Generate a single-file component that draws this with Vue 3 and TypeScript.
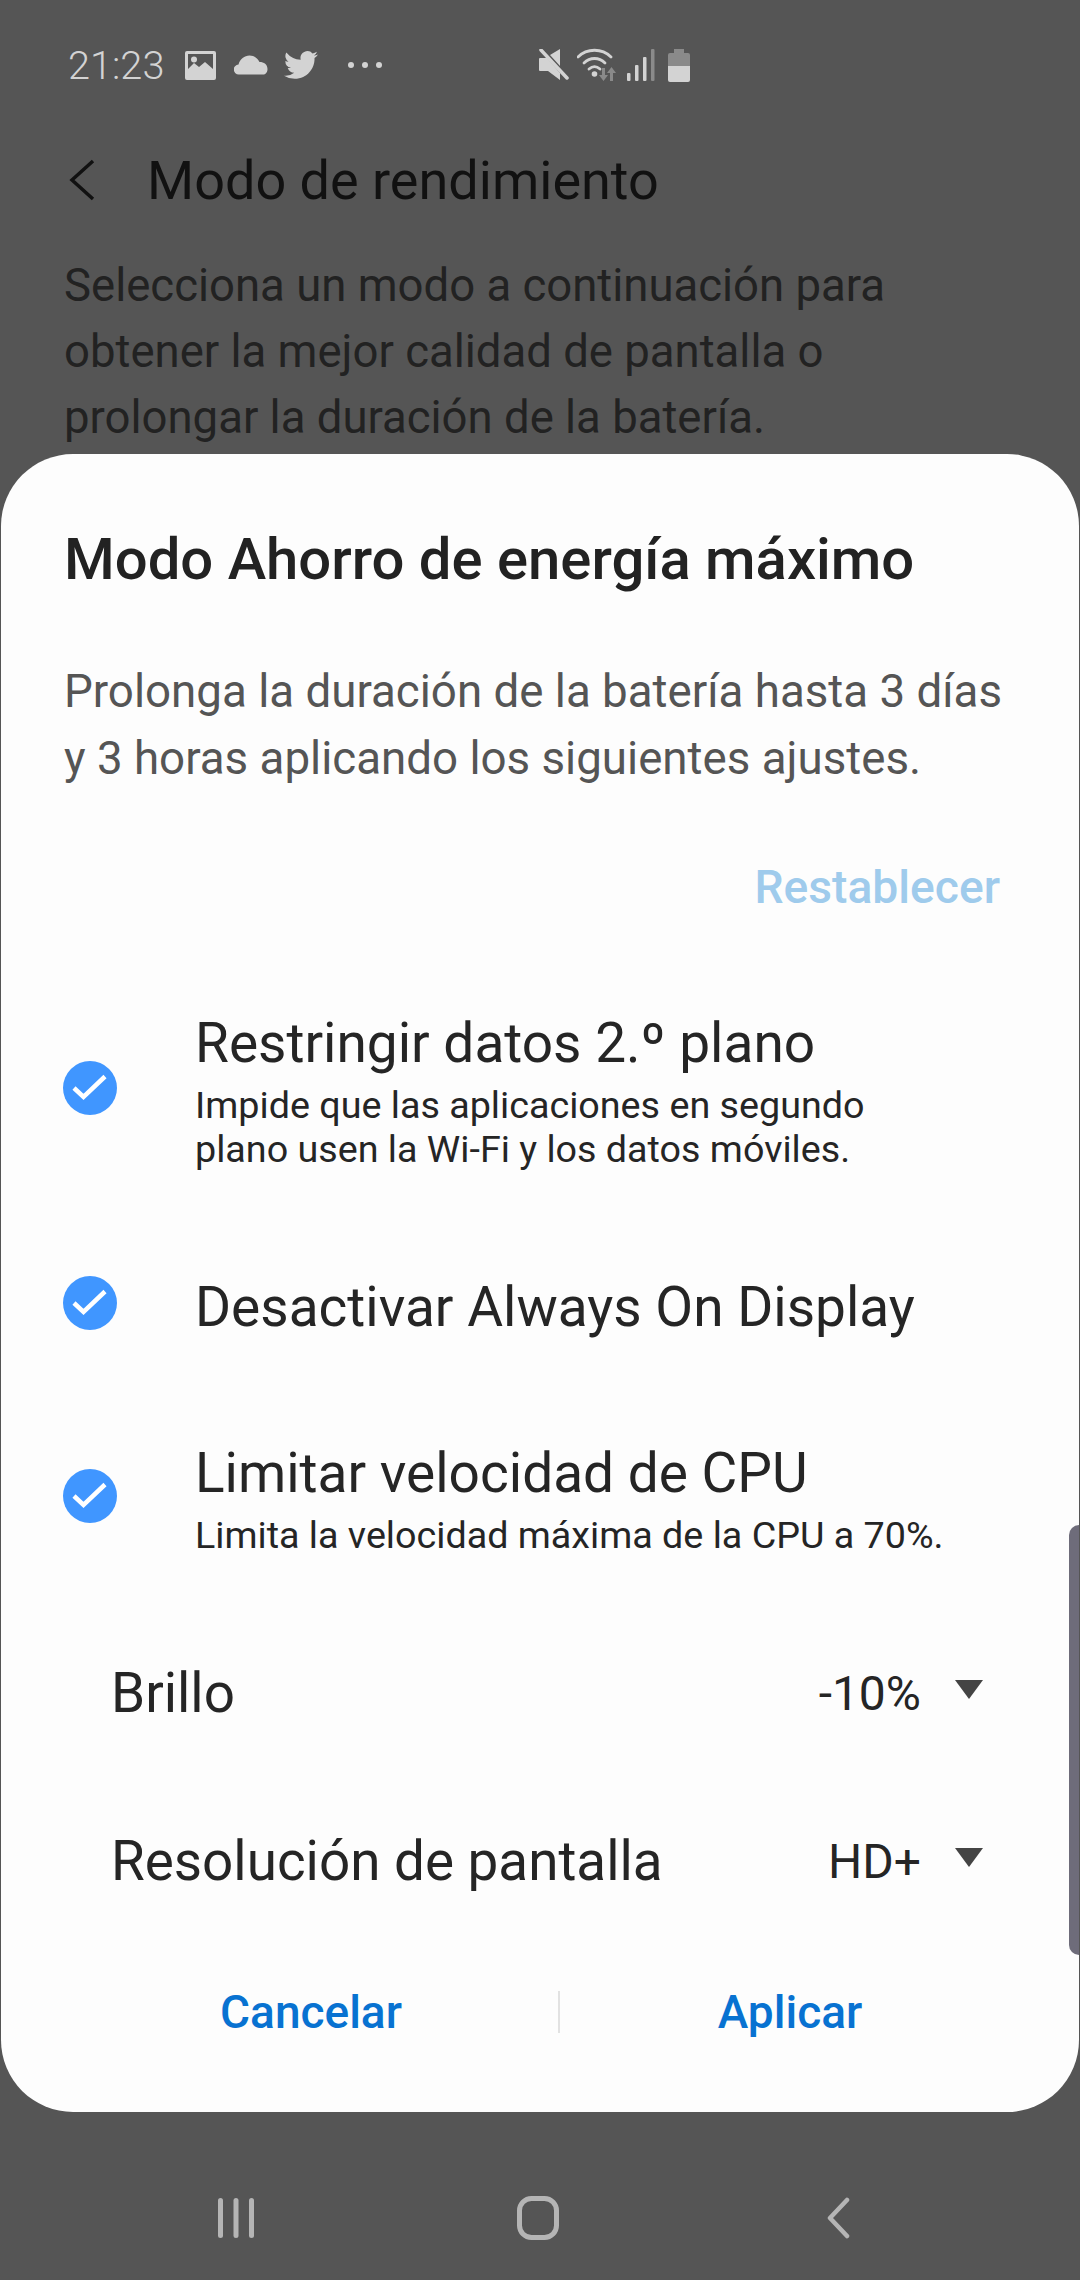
<script setup lang="ts">
interface Option {
  title: string;
  sub?: string[];
}

const options: Option[] = [
  {
    title: 'Restringir datos 2.º plano',
    sub: ['Impide que las aplicaciones en segundo', 'plano usen la Wi-Fi y los datos móviles.'],
  },
  { title: 'Desactivar Always On Display' },
  { title: 'Limitar velocidad de CPU', sub: ['Limita la velocidad máxima de la CPU a 70%.'] },
];

const selects = [
  { label: 'Brillo', value: '-10%' },
  { label: 'Resolución de pantalla', value: 'HD+' },
];
</script>

<template>
  <div class="page">
    <div class="status">
      <span class="time">21:23</span>
      <svg class="ic-pic" width="31" height="29" viewBox="0 0 31 29">
        <path fill-rule="evenodd" fill="#d3d3d3" d="M2 0h27a2 2 0 0 1 2 2v25a2 2 0 0 1-2 2H2a2 2 0 0 1-2-2V2a2 2 0 0 1 2-2zm1 3v15l6-6 5 4 6-5 8 7V3z" />
        <circle cx="9" cy="8.5" r="3" fill="#d3d3d3" />
      </svg>
      <svg class="ic-cloud" width="34" height="20" viewBox="0 0 34 20">
        <path fill="#d3d3d3" d="M5 19.5a5 5 0 0 1-.5-10C6 4 10.500.5 15.500.5c4.500 0 8 2.500 10 6.500 4.500 0 8 2.500 8 7 0 3.500-2 5.500-4.500 5.500z" />
      </svg>
      <svg class="ic-bird" width="34" height="30" viewBox="0 1.500 24 21">
        <path fill="#d3d3d3" d="M23.95 4.57a10 10 0 0 1-2.82.77 4.96 4.96 0 0 0 2.16-2.72c-.95.55-2 .96-3.12 1.19a4.92 4.92 0 0 0-8.39 4.48A13.98 13.98 0 0 1 1.64 3.16a4.92 4.92 0 0 0 1.52 6.57 4.9 4.9 0 0 1-2.23-.61v.06a4.92 4.92 0 0 0 3.95 4.83 5 5 0 0 1-2.21.08 4.94 4.94 0 0 0 4.6 3.42A9.87 9.87 0 0 1 0 19.54a13.94 13.94 0 0 0 7.55 2.21c9.06 0 14-7.5 14-13.98 0-.21 0-.42-.02-.63a9.94 9.94 0 0 0 2.46-2.55z" />
      </svg>
      <svg class="ic-dots" width="34" height="6" viewBox="0 0 34 6">
        <circle cx="3" cy="3" r="3" fill="#d3d3d3" />
        <circle cx="17" cy="3" r="3" fill="#d3d3d3" />
        <circle cx="31" cy="3" r="3" fill="#d3d3d3" />
      </svg>
      <svg class="ic-mute" width="30" height="32" viewBox="0 0 30 32">
        <path fill="#d3d3d3" d="M11 6 21 0v17zM1 9h7l13 15v7L9 22H1a1 1 0 0 1-1-1V10a1 1 0 0 1 1-1z" />
        <path d="M2 1 28 29" stroke="#d3d3d3" stroke-width="3.500" stroke-linecap="round" />
      </svg>
      <svg class="ic-wifi" width="42" height="34" viewBox="0 0 42 34">
        <g fill="none" stroke="#d3d3d3" stroke-width="2.800" stroke-linecap="round">
          <path d="M1 9C10 0 25 0 34 9" />
          <path d="M7 15c6-6 15-6 21 0" />
          <path d="M12 21c3.500-3 7.500-3 11 0" />
        </g>
        <circle cx="17.500" cy="26" r="2.800" fill="#d3d3d3" />
        <path fill="#8a8a8a" d="M25 20h3v7h3l-4.500 6-4.500-6h3zM36 33h-3v-8h-3l4.500-6 4.500 6h-3z" />
      </svg>
      <svg class="ic-signal" width="28" height="32" viewBox="0 0 28 32">
        <rect x="0" y="24" width="3.500" height="8" rx="1" fill="#d3d3d3" />
        <rect x="8" y="16" width="3.500" height="16" rx="1" fill="#d3d3d3" />
        <rect x="16" y="8" width="3.500" height="24" rx="1" fill="#d3d3d3" />
        <rect x="24" y="0" width="3.500" height="32" rx="1" fill="#8a8a8a" />
      </svg>
      <svg class="ic-batt" width="22" height="33" viewBox="0 0 22 33">
        <path fill="#8a8a8a" d="M6 0h10v4h4a2 2 0 0 1 2 2v11H0V6a2 2 0 0 1 2-2h4z" />
        <path fill="#d3d3d3" d="M0 17h22v14a2 2 0 0 1-2 2H2a2 2 0 0 1-2-2z" />
      </svg>
    </div>

    <div class="header">
      <svg width="27" height="42" viewBox="0 0 27 42">
        <path d="M25 2 4 21l21 19" fill="none" stroke="#111" stroke-width="3.500" />
      </svg>
      <span class="header-title">Modo de rendimiento</span>
    </div>

    <p class="intro">
      Selecciona un modo a continuación para<br />
      obtener la mejor calidad de pantalla o<br />
      prolongar la duración de la batería.
    </p>

    <div class="sheet">
      <div class="scrollbar"></div>
      <h2 class="sheet-title">Modo Ahorro de energía máximo</h2>
      <p class="sheet-desc">
        Prolonga la duración de la batería hasta 3 días<br />
        y 3 horas aplicando los siguientes ajustes.
      </p>
      <div class="reset">Restablecer</div>

      <div class="options">
        <div v-for="opt in options" :key="opt.title" class="option">
          <svg class="check" width="54" height="54" viewBox="0 0 54 54">
            <circle cx="27" cy="27" r="27" fill="#4096ff" />
            <path d="M11 27l9.500 9L42 15.500" fill="none" stroke="#fff" stroke-width="4.500" />
          </svg>
          <div class="option-text">
            <div class="option-title">{{ opt.title }}</div>
            <div v-if="opt.sub" class="option-sub">
              <div v-for="line in opt.sub" :key="line">{{ line }}</div>
            </div>
          </div>
        </div>
      </div>

      <div class="selects">
        <div v-for="s in selects" :key="s.label" class="select-row">
          <span class="select-label">{{ s.label }}</span>
          <span class="select-value">{{ s.value }}</span>
          <span class="arrow"></span>
        </div>
      </div>

      <div class="actions">
        <button class="action">Cancelar</button>
        <span class="divider"></span>
        <button class="action">Aplicar</button>
      </div>
    </div>

    <div class="nav">
      <svg width="36" height="40" viewBox="0 0 36 40">
        <g fill="#b5b5b5">
          <rect x="0" y="0" width="5" height="40" rx="2.500" />
          <rect x="15.500" y="0" width="5" height="40" rx="2.500" />
          <rect x="31" y="0" width="5" height="40" rx="2.500" />
        </g>
      </svg>
      <svg width="42" height="44" viewBox="0 0 42 44">
        <rect x="2.500" y="2.500" width="37" height="39" rx="12" fill="none" stroke="#b5b5b5" stroke-width="5" />
      </svg>
      <svg width="24" height="42" viewBox="0 0 24 42">
        <path d="M21 3 4 21l17 18" fill="none" stroke="#b5b5b5" stroke-width="4.500" stroke-linecap="round" stroke-linejoin="round" />
      </svg>
    </div>
  </div>
</template>

<style>
html,
body {
  margin: 0;
  background: #555555;
}
</style>

<style scoped>
.page {
  width: 1080px;
  height: 2280px;
  background: #555555;
  font-family: Roboto, "Liberation Sans", sans-serif;
  display: flex;
  flex-direction: column;
  overflow: hidden;
}

.status {
  height: 130px;
  display: flex;
  align-items: center;
  padding-left: 68px;
  box-sizing: border-box;
}

.time {
  font-size: 39.7px;
  font-weight: 300;
  color: #d3d3d3;
  width: 117px;
}

.ic-cloud {
  margin-left: 18px;
}

.ic-bird {
  margin-left: 16px;
}

.ic-dots {
  margin-left: 30px;
}

.ic-mute {
  margin-left: 157px;
}

.ic-wifi {
  margin-left: 8px;
}

.ic-signal {
  margin-left: 8px;
}

.ic-batt {
  margin-left: 13px;
}

.header {
  height: 100px;
  display: flex;
  align-items: center;
  padding-left: 68px;
}

.header-title {
  margin-left: 52px;
  font-size: 54px;
  color: #111111;
}

.intro {
  margin: 23px 0 0;
  padding-left: 64px;
  font-size: 45.5px;
  line-height: 66px;
  color: #222222;
  height: 197px;
}

.sheet {
  position: relative;
  margin: 4px 1px 0;
  height: 1658px;
  background: #fdfdfd;
  border-radius: 72px;
  display: flex;
  flex-direction: column;
  box-sizing: border-box;
  padding-top: 70px;
}

.scrollbar {
  position: absolute;
  right: 0;
  top: 1071px;
  width: 10px;
  height: 430px;
  background: #6e6c7a;
  border-radius: 12px 0 0 12px;
}

.sheet-title {
  margin: 0;
  padding-left: 63px;
  font-size: 58px;
  font-weight: 500;
  line-height: 70px;
  color: #222222;
}

.sheet-desc {
  margin: 64px 0 0;
  padding-left: 63px;
  font-size: 45.7px;
  line-height: 67px;
  color: #555555;
}

.reset {
  margin-top: 70px;
  padding-right: 79px;
  text-align: right;
  font-size: 46.2px;
  font-weight: 500;
  line-height: 50px;
  color: #9fcbec;
}

.options {
  margin-top: 101px;
  padding-left: 62px;
  display: flex;
  flex-direction: column;
  gap: 106px;
}

.option {
  display: flex;
  align-items: center;
}

.check {
  flex-shrink: 0;
  margin-top: -8px;
}

.option-text {
  margin-left: 78px;
}

.option-title {
  font-size: 55px;
  line-height: 60px;
  color: #252525;
}

.option-sub {
  margin-top: 10px;
  font-size: 37.7px;
  line-height: 44px;
  color: #252525;
}

.selects {
  margin-top: 106px;
  padding: 0 96px 0 110px;
  display: flex;
  flex-direction: column;
  gap: 108px;
}

.select-row {
  display: flex;
  align-items: center;
  height: 60px;
}

.select-label {
  flex: 1;
  font-size: 54.8px;
  color: #252525;
}

.select-value {
  font-size: 48px;
  color: #252525;
}

.arrow {
  margin: -8px 0 0 34px;
  width: 0;
  height: 0;
  border-left: 14px solid transparent;
  border-right: 14px solid transparent;
  border-top: 19px solid #444444;
}

.actions {
  margin-top: 96px;
  padding-left: 63px;
  display: grid;
  grid-template-columns: 494px 2px 460px;
  align-items: center;
}

.action {
  background: none;
  border: none;
  padding: 0;
  font-family: inherit;
  font-size: 46px;
  font-weight: 500;
  line-height: 50px;
  color: #0872d1;
}

.divider {
  height: 42px;
  background: #e2e2e2;
}

.nav {
  flex: 1;
  position: relative;
  display: grid;
  grid-template-columns: 218px 42px 257px 42px 267px 24px;
  align-items: center;
  padding-top: 44px;
}

.nav svg:nth-child(1) {
  grid-column: 2;
}

.nav svg:nth-child(2) {
  grid-column: 4;
}

.nav svg:nth-child(3) {
  grid-column: 6;
}
</style>
